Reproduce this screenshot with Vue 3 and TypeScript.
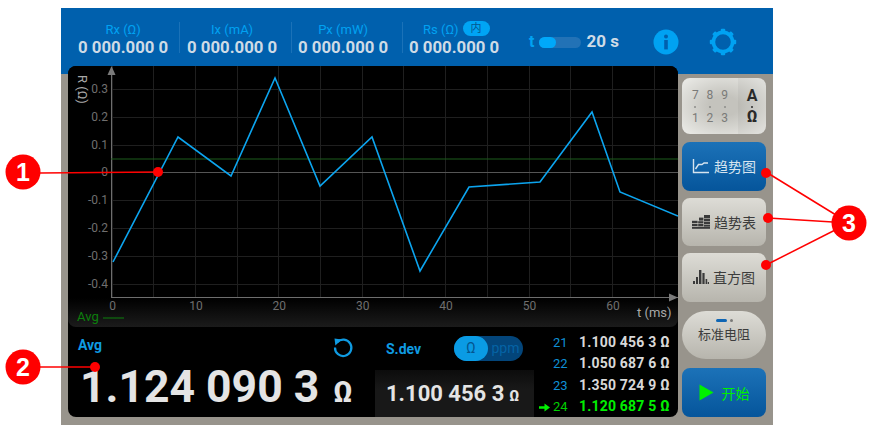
<template>
  <div class="page">
    <div class="device">
      <header class="top-bar">
        <div class="metrics">
          <div v-for="m in metrics" :key="m.label" class="metric">
            <div class="metric-inner">
              <span class="metric-label" :class="{ 'with-chip': m.chip }">
                {{ m.label }}<em v-if="m.chip" class="chip">内</em>
              </span>
              <span class="metric-value">0 000.000 0</span>
            </div>
          </div>
        </div>
        <div class="timer">
          <span class="timer-t">t</span>
          <span class="timer-track"><i></i></span>
          <span class="timer-value">20 s</span>
        </div>
        <svg class="info-icon" width="26" height="26" viewBox="0 0 26 26">
          <circle cx="13" cy="13" r="12.5" fill="#00a2f2" />
          <circle cx="13" cy="7.6" r="2" fill="#0060ad" />
          <rect x="11.2" y="11" width="3.6" height="9.4" fill="#0060ad" />
        </svg>
        <svg class="gear-icon" width="28" height="28" viewBox="0 0 28 28">
          <circle cx="14" cy="14" r="9.6" fill="none" stroke="#00a2f2" stroke-width="3.6" />
          <rect v-for="a in gearTeeth" :key="a" x="11.8" y="0.8" width="4.4" height="4" rx="1" fill="#00a2f2" :transform="`rotate(${a} 14 14)`" />
        </svg>
      </header>

      <div class="body">
        <main class="panel">
          <section class="chart">
            <svg width="610" height="261" viewBox="0 0 610 261">
              <line v-for="x in gridX" :key="'gx' + x" :x1="x" y1="0" :x2="x" y2="231" stroke="#1f1f1f" />
              <line v-for="y in gridY" :key="'gy' + y" x1="43" :y1="y" x2="610" :y2="y" stroke="#1f1f1f" />
              <line x1="43.5" y1="6" x2="43.5" y2="231.5" stroke="#6e6e6e" />
              <line x1="43" y1="231.5" x2="610" y2="231.5" stroke="#6e6e6e" />
              <line x1="43" y1="106.5" x2="610" y2="106.5" stroke="#555" />
              <line x1="43" y1="93" x2="610" y2="93" stroke="#1d5c1d" />
              <polygon points="43.5,0 39.5,9 47.5,9" fill="#7a7a7a" />
              <polygon points="610,231.5 601,227.5 601,235.5" fill="#7a7a7a" />
              <text v-for="t in yTicks" :key="t.label" x="40" :y="t.y + 4" class="tick" text-anchor="end">{{ t.label }}</text>
              <text v-for="t in xTicks" :key="t.label" :x="t.x + 1" y="244" class="tick" text-anchor="middle">{{ t.label }}</text>
              <text x="569" y="251" class="axis-name">t (ms)</text>
              <text transform="translate(10 9) rotate(90)" class="axis-name">R (Ω)</text>
              <polyline :points="trace" fill="none" stroke="#0ca4ee" stroke-width="1.6" />
              <text x="9" y="255" class="legend">Avg</text>
              <line x1="35" y1="252" x2="56" y2="252" stroke="#0c800c" />
            </svg>
          </section>

          <section class="readout">
            <div class="avg">
              <div class="avg-head">
                <span class="readout-label">Avg</span>
                <svg width="22" height="22" viewBox="0 0 22 22">
                  <path d="M5.2 6.2A8.2 8.2 0 1 1 3 11.5" fill="none" stroke="#0f9be2" stroke-width="2.2" />
                  <polygon points="2.5,2.6 9.6,3.4 3.4,9.4" fill="#0f9be2" />
                </svg>
              </div>
              <div class="avg-value">1.124 090 3<small>Ω</small></div>
            </div>

            <div class="sdev">
              <div class="sdev-head">
                <span class="readout-label">S.dev</span>
                <div class="unit-toggle">
                  <span class="on">Ω</span>
                  <span>ppm</span>
                </div>
              </div>
              <div class="sdev-value">1.100 456 3<small>Ω</small></div>
            </div>

            <ul class="history">
              <li v-for="r in history" :key="r.no" :class="{ current: r.current }">
                <svg v-if="r.current" class="arrow" width="11" height="9" viewBox="0 0 11 9">
                  <path d="M0 3.2h5.5V0.4L11 4.5 5.5 8.6V5.8H0z" fill="#00f000" />
                </svg>
                <span class="no">{{ r.no }}</span>
                <span class="val">{{ r.value }} Ω</span>
              </li>
            </ul>
          </section>
        </main>

        <aside class="side">
          <button class="keypad">
            <span class="keys">
              <i>7</i><i>8</i><i>9</i>
              <b></b><b></b><b></b>
              <i>1</i><i>2</i><i>3</i>
            </span>
            <span class="keys-unit"><span>A</span><s></s><span>Ω</span></span>
          </button>

          <button class="side-btn active">
            <svg width="18" height="16" viewBox="0 0 18 16" fill="none" stroke="currentColor">
              <path d="M1.5 1v13.5H17" stroke-width="1.4" />
              <path d="M3.5 11l3-4.5h3.5l2-1.5H16" stroke-width="1.4" />
            </svg>
            趋势图
          </button>
          <button class="side-btn">
            <svg width="18" height="14" viewBox="0 0 18 14" fill="#3a3a3a">
              <rect x="12" y="0" width="6" height="3.4" />
              <rect x="7" y="2.6" width="4.4" height="3" />
              <rect x="12" y="4" width="6" height="2.4" />
              <rect x="0" y="5.8" width="5.6" height="2.2" />
              <rect x="6.2" y="6.2" width="5.2" height="2.2" />
              <rect x="12" y="7" width="6" height="2.2" />
              <rect x="0" y="8.8" width="5.6" height="2.2" />
              <rect x="6.2" y="9" width="5.2" height="2.2" />
              <rect x="12" y="9.8" width="6" height="1.8" />
              <rect x="0" y="11.8" width="18" height="2" />
            </svg>
            趋势表
          </button>
          <button class="side-btn">
            <svg width="16" height="14" viewBox="0 0 16 14" fill="#3a3a3a">
              <rect x="0" y="11" width="2" height="3" />
              <rect x="3" y="7" width="2" height="7" />
              <rect x="6" y="0" width="2.4" height="14" />
              <rect x="9.4" y="3" width="2.2" height="11" />
              <rect x="12.6" y="9" width="1.6" height="5" />
              <rect x="14.8" y="12" width="1.2" height="2" />
            </svg>
            直方图
          </button>

          <button class="pill-btn">
            <span class="pill-led"><i></i><u></u></span>
            标准电阻
          </button>

          <button class="side-btn active start">
            <svg width="15" height="17" viewBox="0 0 15 17"><polygon points="0.5,0.5 14.5,8.5 0.5,16.5" fill="#00f000" /></svg>
            开始
          </button>
        </aside>
      </div>
    </div>

    <svg class="callouts" width="872" height="438" viewBox="0 0 872 438">
      <g stroke="#f00" fill="none" stroke-width="1.5">
        <path d="M40 173 L158 172" />
        <path d="M40 367 L95 367" />
        <path d="M766 172 L849 223" />
        <path d="M768 218 L849 223" />
        <path d="M766 265 L849 223" />
      </g>
      <g fill="#f00">
        <circle cx="158" cy="172" r="5" />
        <circle cx="95" cy="367" r="5" />
        <circle cx="766" cy="173" r="5" />
        <circle cx="768" cy="218" r="5" />
        <circle cx="766" cy="265" r="5" />
        <circle cx="23" cy="172" r="17.5" />
        <circle cx="23" cy="367" r="17.5" />
        <circle cx="849" cy="223" r="17.5" />
      </g>
      <g class="callout-no" text-anchor="middle">
        <text x="23" y="181">1</text>
        <text x="23" y="376">2</text>
        <text x="849" y="232">3</text>
      </g>
    </svg>
  </div>
</template>

<script setup lang="ts">
const metrics = [
  { label: 'Rx (Ω)' },
  { label: 'Ix (mA)' },
  { label: 'Px (mW)' },
  { label: 'Rs (Ω)', chip: true }
]

const gearTeeth = [0, 45, 90, 135, 180, 225, 270, 315]

// chart coordinates, origin is the panel's top left
const x0 = 43.5
const stepX = 41.7
const gridX = Array.from({ length: 14 }, (_, i) => Math.round(x0 + stepX * i) + 0.5)
const gridY = Array.from({ length: 8 }, (_, i) => Math.round(23 + 27.8 * i) + 0.5)

const yTicks = ['0.3', '0.2', '0.1', '0', '-0.1', '-0.2', '-0.3', '-0.4'].map((label, i) => ({
  label,
  y: 23 + 27.8 * i
}))
const xTicks = [0, 10, 20, 30, 40, 50, 60].map((v, i) => ({
  label: String(v),
  x: x0 + 83.4 * i
}))

const trace = [
  [113, 262], [178, 137], [231, 176], [275, 78], [320, 186], [372, 137],
  [420, 271], [469, 187], [540, 182], [592, 112], [620, 192], [678, 216]
].map(([x, y]) => `${x - 68},${y - 66}`).join(' ')

const history = [
  { no: 21, value: '1.100 456 3' },
  { no: 22, value: '1.050 687 6' },
  { no: 23, value: '1.350 724 9' },
  { no: 24, value: '1.120 687 5', current: true }
]
</script>

<style>
html,
body {
  background: #fff;
}
</style>

<style scoped>
.page {
  position: relative;
  width: 872px;
  height: 438px;
  padding: 8px 0 0 61px;
  box-sizing: border-box;
  overflow: hidden;
  font-family: Roboto, "Noto Sans CJK SC", sans-serif;
}

.device {
  width: 712px;
  height: 417px;
  background: linear-gradient(#0060ad 66px, #98948c 66px);
}

.top-bar {
  height: 58px;
  display: flex;
  align-items: flex-start;
}

.metrics {
  display: grid;
  grid-template-columns: 109px 112px 111px 112px;
  margin: 14px 0 0 9px;
}

.metric {
  padding-left: 7px;
  height: 31px;
  border-left: 1px solid #1b72b8;
}

.metric:first-child {
  padding-left: 8px;
  border-left: 0;
}

.metric:nth-child(n + 3) {
  padding-left: 6px;
}

.metric-inner {
  display: flex;
  width: fit-content;
  flex-direction: column;
  align-items: center;
}

.metric-label {
  font-size: 13px;
  line-height: 15px;
  color: #00a2f2;
}

.metric-label.with-chip {
  align-self: flex-start;
  margin-left: 14px;
  display: flex;
  white-space: nowrap;
}

.chip {
  width: 27px;
  height: 15px;
  margin: -1px 0 0 4px;
  border-radius: 8px;
  background: #00a5f5;
  color: #05558f;
  font-size: 11px;
  line-height: 15px;
  font-style: normal;
  text-align: center;
}

.metric-value {
  font-size: 16.8px;
  font-weight: 700;
  line-height: 20px;
  color: #cfdbe6;
  white-space: nowrap;
}

.timer {
  display: flex;
  align-items: center;
  margin: 21px 0 0 15px;
  height: 26px;
}

.timer-t {
  font-size: 16px;
  font-weight: 700;
  color: #00a2f2;
  margin: -1px 5px 0 0;
}

.timer-track {
  width: 42px;
  height: 11px;
  border-radius: 6px;
  background: #2272b6;
}

.timer-track i {
  display: block;
  width: 17px;
  height: 11px;
  border-radius: 6px;
  background: #00a8fa;
}

.timer-value {
  margin: -2px 0 0 5px;
  font-size: 17px;
  font-weight: 700;
  color: #cfdbe6;
}

.info-icon {
  margin: 21px 0 0 34px;
}

.gear-icon {
  margin: 20px 0 0 30px;
}

.body {
  display: flex;
  align-items: flex-start;
  padding-left: 7px;
}

.panel {
  width: 610px;
  height: 351px;
  background: #000;
  border-radius: 8px;
  overflow: hidden;
  flex: none;
}

.chart {
  height: 261px;
  background: linear-gradient(#000 232px, #1b1b1b);
  border-radius: 0 0 8px 8px;
}

.chart svg {
  display: block;
}

.tick {
  font-size: 12px;
  fill: #6f6f6f;
}

.axis-name {
  font-size: 13px;
  fill: #a8a8a8;
}

.legend {
  font-size: 13px;
  fill: #0c800c;
}

.readout {
  height: 90px;
  display: grid;
  grid-template-columns: 307px 159px 144px;
}

.avg {
  padding: 6px 0 0 10px;
}

.avg-head {
  display: flex;
  justify-content: space-between;
  align-items: center;
  width: 276px;
  height: 24px;
}

.avg-head svg {
  margin-top: 4px;
}

.readout-label {
  font-size: 14px;
  font-weight: 700;
  color: #0f9be2;
}

.avg-value {
  margin: 6px 0 0 2px;
  font-size: 44.5px;
  font-weight: 700;
  line-height: 48px;
  color: #e4e4e4;
  white-space: nowrap;
}

.avg-value small {
  margin-left: 14px;
  font-size: 29px;
}

.sdev {
  display: flex;
  flex-direction: column;
  justify-content: space-between;
}

.sdev-head {
  display: flex;
  align-items: center;
  justify-content: space-between;
  padding: 9px 11px 0 11px;
}

.unit-toggle {
  display: flex;
  width: 69px;
  height: 25px;
  border-radius: 13px;
  background: #03457a;
  font-size: 14px;
  line-height: 25px;
  color: #0563a5;
}

.unit-toggle span {
  flex: 1;
  text-align: center;
}

.unit-toggle .on {
  flex: none;
  width: 34px;
  border-radius: 13px;
  background: #0a9be4;
  color: #04558f;
}

.sdev-value {
  height: 47px;
  padding-left: 11px;
  background: linear-gradient(#0c0c0c, #181818 40%);
  font-size: 22px;
  font-weight: 700;
  line-height: 47px;
  color: #e4e4e4;
  white-space: nowrap;
}

.sdev-value small {
  margin-left: 5px;
  font-size: 15px;
}

.history {
  list-style: none;
  margin: 0;
  padding: 5px 0 0;
}

.history li {
  position: relative;
  display: flex;
  height: 21.3px;
  line-height: 21.3px;
  padding-left: 19px;
  white-space: nowrap;
}

.arrow {
  position: absolute;
  left: 5px;
  top: 7px;
}

.no {
  width: 26px;
  font-size: 13px;
  color: #0f8fd6;
}

.val {
  font-size: 14px;
  font-weight: 700;
  letter-spacing: 0.2px;
  color: #d8d8d8;
}

.current .no {
  color: #00d000;
}

.current .val {
  color: #00f000;
}

.side {
  width: 84px;
  margin-left: 4px;
  padding-top: 12px;
  display: flex;
  flex-direction: column;
  flex: none;
}

button {
  display: flex;
  align-items: center;
  justify-content: center;
  border: 0;
  padding: 0;
  width: 84px;
  font-family: inherit;
}

.keypad {
  height: 56px;
  margin-bottom: 8px;
  border-radius: 8px;
  overflow: hidden;
  background: radial-gradient(ellipse at center, #c4c3bd 25%, #eaeae6 95%);
}

.keys {
  width: 56px;
  height: 56px;
  box-sizing: border-box;
  padding: 9px 6px;
  display: grid;
  grid-template-columns: repeat(3, 1fr);
  grid-template-rows: 16px 7px 16px;
  justify-items: center;
  align-items: center;
  color: #7a7a78;
}

.keys i {
  font-style: normal;
  font-size: 12px;
  line-height: 16px;
}

.keys b {
  width: 2px;
  height: 2px;
  border-radius: 50%;
  background: #8c8c8a;
}

.keys-unit {
  width: 28px;
  height: 56px;
  box-sizing: border-box;
  padding-top: 1px;
  display: flex;
  flex-direction: column;
  align-items: center;
  justify-content: center;
  font-size: 16px;
  font-weight: 700;
  line-height: 16px;
  color: #2a2a2a;
  background: rgba(0, 0, 0, 0.04);
}

.keys-unit s {
  width: 2px;
  height: 2px;
  margin: 2px 0 1px;
  border-radius: 50%;
  background: #2a2a2a;
}

.side-btn {
  height: 48.5px;
  margin-bottom: 7px;
  gap: 4px;
  border-radius: 8px;
  background: linear-gradient(#dddcd6, #b7b5ad);
  color: #3c3c3c;
  font-size: 14px;
}

.side-btn.active {
  background: linear-gradient(#1c72b8, #05559b);
  color: #d6e4ef;
}

.side-btn.start {
  height: 49px;
  color: #00f000;
  gap: 8px;
  margin-bottom: 0;
}

.pill-btn {
  flex-direction: column;
  justify-content: flex-start;
  height: 48px;
  margin: 2.5px 0 9px;
  padding-top: 8px;
  border-radius: 24px;
  background: linear-gradient(#dddcd6, #b7b5ad);
  color: #3c3c3c;
  font-size: 13px;
  line-height: 18px;
}

.pill-led {
  display: flex;
  align-items: center;
  gap: 3px;
  height: 3px;
  margin-bottom: 4px;
}

.pill-led i {
  width: 11px;
  height: 3px;
  border-radius: 2px;
  background: #0f66b4;
}

.pill-led u {
  width: 3px;
  height: 3px;
  border-radius: 50%;
  background: #7a7a78;
}

.callouts {
  position: absolute;
  left: 0;
  top: 0;
  pointer-events: none;
}

.callout-no {
  font-family: "Liberation Sans", sans-serif;
  font-size: 25px;
  font-weight: 700;
  fill: #fff;
}
</style>
